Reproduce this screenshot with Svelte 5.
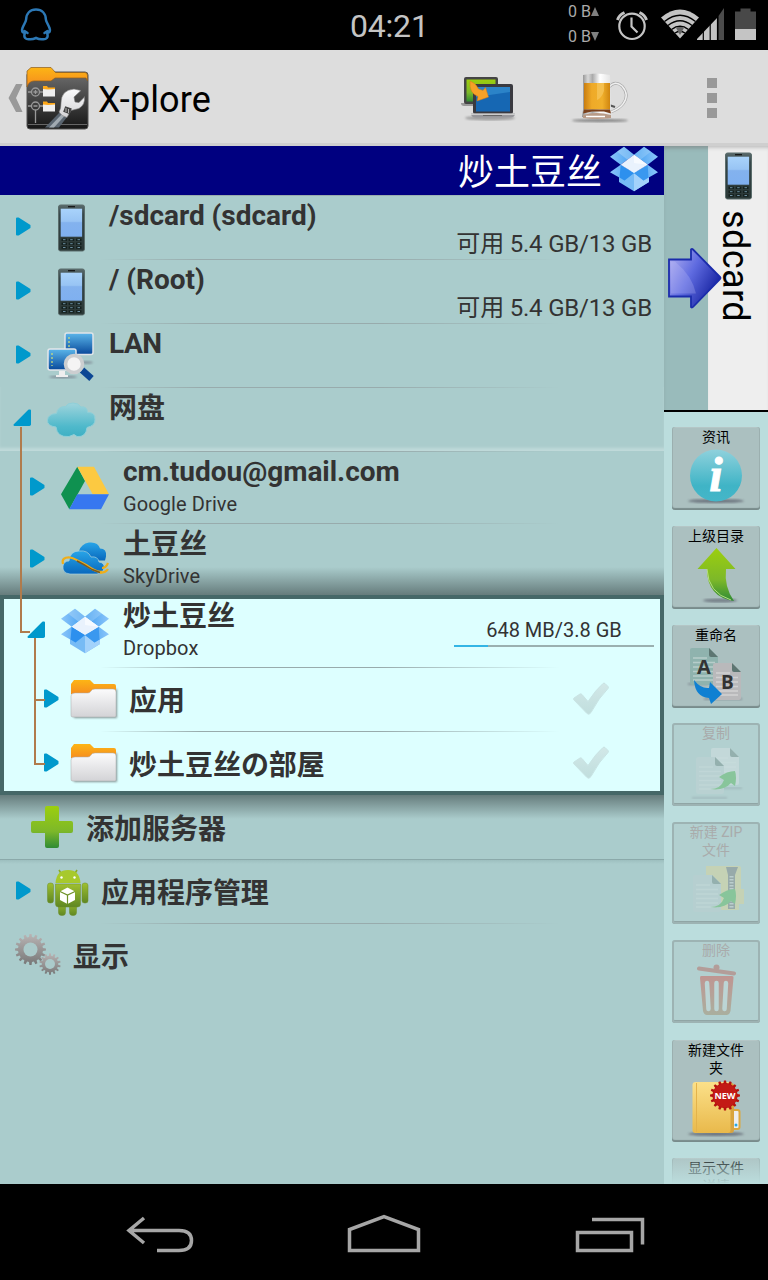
<script>
  const gear = (cx, cy, r, n, depth) => {
    const pts = [];
    for (let i = 0; i < n; i++) {
      const step = (Math.PI * 2) / n;
      [[-0.3, r - depth], [-0.18, r], [0.18, r], [0.3, r - depth]].forEach(([o, rad]) => {
        const a = (i + o) * step - Math.PI / 2;
        pts.push(`${(cx + Math.cos(a) * rad).toFixed(2)},${(cy + Math.sin(a) * rad).toFixed(2)}`);
      });
    }
    return pts.join(' ');
  };
</script>

<svg class="defs" width="0" height="0">
  <defs>
    <linearGradient id="screen" x1="0" y1="0" x2="0" y2="1"><stop offset="0" stop-color="#a9d3fb" /><stop offset=".45" stop-color="#98c4f4" /><stop offset=".5" stop-color="#83b2ee" /><stop offset="1" stop-color="#7fb0f0" /></linearGradient>
    <linearGradient id="body" x1="0" y1="0" x2="0" y2="1"><stop offset="0" stop-color="#5a6b6c" /><stop offset=".2" stop-color="#36474a" /><stop offset="1" stop-color="#2b3836" /></linearGradient>
    <linearGradient id="orange" x1="0" y1="0" x2="0" y2="1"><stop offset="0" stop-color="#fdb515" /><stop offset="1" stop-color="#f58a1f" /></linearGradient>
    <linearGradient id="paper" x1="0" y1="0" x2="0" y2="1"><stop offset="0" stop-color="#fbfbfc" /><stop offset="1" stop-color="#d3d3d6" /></linearGradient>
    <linearGradient id="cloud" x1="0" y1="0" x2="0" y2="1"><stop offset="0" stop-color="#9fd4dc" /><stop offset=".7" stop-color="#4fb9cb" /><stop offset="1" stop-color="#3fb0c4" /></linearGradient>
    <linearGradient id="green" x1="0" y1="0" x2="0" y2="1"><stop offset="0" stop-color="#9ccf0e" /><stop offset=".6" stop-color="#7db829" /><stop offset="1" stop-color="#2f8b35" /></linearGradient>
    <linearGradient id="monitor" x1="0" y1="0" x2="0" y2="1"><stop offset="0" stop-color="#5bb6ea" /><stop offset="1" stop-color="#08489a" /></linearGradient>
    <linearGradient id="sky" x1="0" y1="0" x2="0" y2="1"><stop offset="0" stop-color="#29a5e8" /><stop offset="1" stop-color="#0868bd" /></linearGradient>
    <linearGradient id="droid" x1="0" y1="0" x2="0" y2="1"><stop offset="0" stop-color="#9fc030" /><stop offset="1" stop-color="#5f8722" /></linearGradient>
    <linearGradient id="metal" x1="0" y1="0" x2="0" y2="1"><stop offset="0" stop-color="#b9b4b4" /><stop offset="1" stop-color="#777" /></linearGradient>
    <linearGradient id="tick" x1="0" y1="0" x2="0" y2="1"><stop offset="0" stop-color="#d2e8e8" /><stop offset="1" stop-color="#c0dedd" /></linearGradient>
    <linearGradient id="beer" x1="0" y1="0" x2="1" y2="0"><stop offset="0" stop-color="#c97d10" /><stop offset=".3" stop-color="#efaa28" /><stop offset=".7" stop-color="#f0b02c" /><stop offset="1" stop-color="#d0860f" /></linearGradient>
    <linearGradient id="glass" x1="0" y1="0" x2="1" y2="0"><stop offset="0" stop-color="#8a8a8a" /><stop offset=".2" stop-color="#d8d8d8" /><stop offset=".35" stop-color="#aaa" /><stop offset=".6" stop-color="#fff" /><stop offset="1" stop-color="#e0e0e0" /></linearGradient>
    <linearGradient id="arrow" x1="0" y1="0" x2="1" y2=".6"><stop offset="0" stop-color="#b9b6f2" /><stop offset=".5" stop-color="#5f6be0" /><stop offset="1" stop-color="#1522a0" /></linearGradient>
    <linearGradient id="info" x1="0" y1="0" x2="0" y2="1"><stop offset="0" stop-color="#8fd1dc" /><stop offset=".7" stop-color="#3fb4c6" /><stop offset="1" stop-color="#45b6c8" /></linearGradient>
    <linearGradient id="folderY" x1="0" y1="0" x2="0" y2="1"><stop offset="0" stop-color="#fbe089" /><stop offset="1" stop-color="#e9b94b" /></linearGradient>
    <linearGradient id="red" x1="0" y1="0" x2="0" y2="1"><stop offset="0" stop-color="#d92a20" /><stop offset="1" stop-color="#9c7445" /></linearGradient>
    <linearGradient id="dark" x1="0" y1="0" x2="0" y2="1"><stop offset="0" stop-color="#6e6e6e" /><stop offset="1" stop-color="#161616" /></linearGradient>
    <linearGradient id="fade" x1="0" y1="0" x2="1" y2="0"><stop offset="0" stop-color="#3f9df0" /><stop offset="1" stop-color="#8cc6fa" /></linearGradient>
    <linearGradient id="fade2" x1="0" y1="0" x2="1" y2="0"><stop offset="0" stop-color="#8cc6fa" /><stop offset="1" stop-color="#3f9df0" /></linearGradient>
    <filter id="soft"><feGaussianBlur stdDeviation="1.2" /></filter>
  </defs>
</svg>

{#snippet closed()}
  <svg class="tri" width="16" height="19" viewBox="0 0 16 19"><path d="M2 1.500h1.500L14.500 8.500v2L3.500 17.500H2z" fill="#0099cc" stroke="#0099cc" stroke-width="2" stroke-linejoin="round" /></svg>
{/snippet}
{#snippet opened()}
  <svg class="tri open" width="18" height="18" viewBox="0 0 18 18"><path d="M1.500 16L16 1.500H17v14l-1 .5z" fill="#0099cc" stroke="#0099cc" stroke-width="2" stroke-linejoin="round" /></svg>
{/snippet}
{#snippet phone()}
  <svg class="ico" width="48" height="48" viewBox="0 0 48 48">
    <rect x="11.500" y="1" width="26" height="46" rx="2" fill="url(#body)" stroke="#5b6d6c" stroke-width="1" />
    <rect x="13.700" y="4.700" width="21.400" height="28" fill="url(#screen)" />
    <path d="M21 2.700h7" stroke="#111" stroke-width="1.200" />
    {#each [35.700, 39.700, 43.500] as y}
      <path d="M14.500 {y}h5.500M21.700 {y}h5.500M29 {y}h5.500" stroke="#14201e" stroke-width="2.600" />
      <path d="M16 {y}h2.500M23.200 {y}h2.500M30.500 {y}h2.500" stroke="#6c8ea0" stroke-width="1" />
    {/each}
  </svg>
{/snippet}
{#snippet dropbox()}
  <svg class="ico" width="48" height="48" viewBox="61 606 48 48">
    <path d="M70 638l15-8 15 8v5l-15 9.200L70 643z" fill="#77bbf5" />
    <path d="M85 634v18.200l15-9.200v-4z" fill="#a3d2fb" />
    <path d="M75 607.700l10 8-13.300 10L61 617.700z" fill="url(#fade2)" />
    <path d="M95 607.700l-10 8 13.700 10 10.300-8z" fill="url(#fade)" />
    <path d="M75 607.700l10 8-6.500 5L68 612.500z" fill="#b3daf8" opacity=".45" />
    <path d="M95 607.700l-10 8 6.500 5L102 612.500z" fill="#b3daf8" opacity=".35" />
    <path d="M61 633.300l10.700-7.600L85 634l-9.500 7.500z" fill="url(#fade2)" />
    <path d="M109 633.300l-10.300-7.600L85 634l9.500 7.500z" fill="url(#fade)" />
    <path d="M71.700 625.700L85 634l-9.500 7.500-5-3z" fill="#2d90ee" />
    <path d="M98.700 625.700L85 634l9.500 7.500 5-3z" fill="#3a98ef" />
    <path d="M85 615.700l13.700 10L85 634l-13.300-8.300z" fill="#e9f2fd" />
    <path d="M85 615.700l13.700 10L85 624z" fill="#f6faff" />
  </svg>
{/snippet}
{#snippet folder()}
  <svg class="ico" width="48" height="40" viewBox="0 0 48 40">
    <path d="M3 10h44v29H4z" fill="#718080" opacity=".8" filter="url(#soft)" />
    <path d="M1 15V5l3-4h16l4 4h20q2 0 2 2v9z" fill="url(#orange)" />
    <path d="M1 36V17q0-3 4-3h13q2 0 3-2t4-2h18q3 0 3 3v24q0 1-1 1H2q-1 0-1-2z" fill="url(#paper)" stroke="#aaa" stroke-width=".5" />
  </svg>
{/snippet}
{#snippet check()}
  <svg class="check" width="38" height="34" viewBox="0 0 38 34"><path d="M2 16l6-4q1-.5 2 .5l6 7q8-12 15-18 1-.8 2 0l3 3q1 1 0 2-9 9-17 24-2 3-4 1L2 18q-1-1 0-2z" fill="url(#tick)" stroke="#c9e4e4" /></svg>
{/snippet}
{#snippet sheet(x, y, c)}
  <g transform="translate({x} {y})">
    <path d="M0 2q0-2 2-2h17l9 9v26q0 2-2 2H2q-2 0-2-2z" fill={c} />
    <path d="M19 0l9 9h-7q-2 0-2-2z" fill="#5d7672" />
    <path d="M3 10h14M3 14.500h22M3 19h22M3 23.500h22M3 28h22M3 32h22" stroke="#fff" stroke-width="1.400" opacity=".35" />
  </g>
{/snippet}

<div class="device">
  <header class="status">
    <svg class="qq" width="34" height="36" viewBox="19 8 34 36"><path d="M36 10.500c-6 0-9.700 4-9.900 10-.1 2-2 4.500-3.600 8.500-1.200 3.300-.2 4.500 2.300 4.800-1.500 5 1 6.800 4.500 6.500 3 .2 5-.5 6.700-1.300 1.700.8 3.700 1.500 6.700 1.300 3.500.3 6-1.500 4.500-6.500 2.500-.3 3.500-1.500 2.300-4.800-1.600-4-3.500-6.500-3.600-8.500-.2-6-3.900-10-9.900-10zM24.500 32l3 2M47.500 32l-3 2" fill="none" stroke="#2c78b5" stroke-width="2.500" stroke-linecap="round" /></svg>
    <span class="time">04:21</span>
    <div class="traffic"><span>0 B<i class="up"></i></span><span>0 B<i class="down"></i></span></div>
    <svg class="sys" width="152" height="50" viewBox="608 0 152 50">
      <g fill="none" stroke="#c4c4c4" stroke-width="2.200"><circle cx="632" cy="26.300" r="12.700" /><path d="M631.500 17.500v9l6 6" /><path d="M617.500 20q1.500-5 7-7.500M646.500 20q-1.500-5-7-7.500" stroke-width="3" /></g>
      <path d="M661 17.500q19-16 38 0L680 38.500z" fill="#c4c4c4" />
      <path d="M664.500 21.500q15.500-12.500 31 0M668 25.500q12-9.500 24 0M671.500 29.500q8.500-6.500 17 0M675 33q5-3.500 10 0" fill="none" stroke="#000" stroke-width="1.300" />
      <path d="M675.500 27h9l-4.500 8z" fill="#666" />
      <path d="M697 40v-1l20-21v22z" fill="#c4c4c4" /><path d="M718.500 16l5.500-8v32h-5.500z" fill="#4b4b4b" />
      <path d="M703.300 25v16M710.200 18v23M717.500 10v31" stroke="#000" stroke-width="1.200" />
      <path d="M735 11.500h5.500V8.500h10v3h5.500V29h-21z" fill="#484848" /><path d="M735 29h21v11h-21z" fill="#c4c4c4" />
    </svg>
  </header>

  <header class="action">
    <svg class="logo" width="84" height="68" viewBox="6 64 84 68">
      <path d="M16 84h6.500l-6.500 14 6.500 14H16l-7.500-14z" fill="#999" />
      <rect x="27" y="72" width="61" height="57" rx="3" fill="url(#dark)" stroke="#555" />
      <path d="M27 87V71l4-3.500h20l4.500 5H85q2.500 0 2.500 3V81L86 78H55l-4 3H34q-5 0-7 6z" fill="url(#orange)" stroke="#8b5c20" stroke-width=".7" />
      <path d="M28 124.500h59" stroke="#666" />
      <g fill="none" stroke="#999" stroke-width="1.300"><circle cx="35.500" cy="92" r="4" /><circle cx="35.500" cy="106" r="4" /><path d="M28 92h3.500M39.500 92H43M33.500 92h4M35.500 90v4M28 106h3.500M39.500 106H43M33.500 106h4M35.500 110v13" /></g>
      <path d="M43 88h12v8.500H43zM43 103h12v8.500H43z" fill="#eee" /><path d="M43 89v-3h4l1 1.500h7V89l-7 .5zM43 104.500v-3h4l1 1.500h7v1.500l-7 .5z" fill="#fda819" />
      <path d="M45 127.500L60 112l7 5-8 10.500z" fill="#59646f" /><path d="M49 127.500L62 114l2.500 2-10.500 11.500z" fill="#a1aab2" />
      <path d="M59 112q2-3 2-9 0-13 13-14l7 1.500-7 6.500 1 5 4 .5 5-5 .5 -1q1 8-5.500 12l-8 2-4 7q-5-1-8-5.500z" fill="url(#paper)" stroke="#777" stroke-width=".6" />
      <rect x="64" y="107" width="7" height="6" fill="#444" transform="rotate(20 67 110)" /><path d="M66 108v4M68.500 109v4" stroke="#ccc" stroke-width=".8" />
    </svg>
    <h1>X-plore</h1>
    <svg class="act" width="60" height="56" viewBox="458 72 60 56">
      <ellipse cx="490" cy="119" rx="25" ry="2.500" fill="#777" opacity=".6" filter="url(#soft)" />
      <path d="M461 104h14v3h-11q-3 0-3-3z" fill="#999" />
      <rect x="464" y="78" width="34" height="27" rx="2" fill="#444" /><rect x="466.500" y="80.500" width="29" height="22" fill="url(#green)" />
      <rect x="473" y="85" width="40" height="30" rx="2" fill="#3a3a40" /><rect x="476" y="88" width="34" height="24.500" fill="#1667b3" /><path d="M476 88h34v5l-34 5z" fill="#2b83c8" />
      <path d="M471 114.500h44q0 4-5 4h-34q-5 0-5-4z" fill="#97979b" /><path d="M471 114.500h44v1.500h-44z" fill="#ccc" /><path d="M483 116.500h19" stroke="#666" />
      <path d="M470 82q6 2 8.500 8l4.500 1.500 2.500-3L488.500 98 477 102l1-4.500q-9-3-8-15.500z" fill="#f7a127" stroke="#d67b14" stroke-width=".5" />
    </svg>
    <svg class="act" width="60" height="56" viewBox="570 72 60 56">
      <ellipse cx="600" cy="121.500" rx="28" ry="1.700" fill="#666" opacity=".7" filter="url(#soft)" />
      <path d="M609 88q6-7 13-1 8 9 1 18-4 5-12 8" fill="none" stroke="#aaa" stroke-width="2.800" /><path d="M609 88q6-7 13-1 8 9 1 18-4 5-12 8" fill="none" stroke="#f0f0f0" stroke-width="1.400" />
      <path d="M609 106l6 2" stroke="#555" stroke-width="2" />
      <path d="M583 76q13-3 27 0l1 35 1 7q-15 4-30 0l1-7z" fill="url(#glass)" />
      <path d="M584 84h26v26.500h-26z" fill="url(#beer)" /><path d="M597 84h7v8q-3 8-7 9z" fill="#f8cc68" opacity=".6" />
      <path d="M584 110.500h26l1 4-7-2h-12l-9 2z" fill="#7c421d" /><path d="M583 116q13-4 28 0v3q-14 2-28 0z" fill="#b89a86" /><path d="M586 117.500h19" stroke="#fff" stroke-width="1.500" />
    </svg>
    <div class="more"><i></i><i></i><i></i></div>
  </header>

  <main>
    <section class="pane">
      <div class="path"><span>炒土豆丝</span>{@render dropbox()}</div>
      <div class="list">
        <div class="row">{@render closed()}{@render phone()}<div class="label"><b>/sdcard (sdcard)</b></div><span class="free">可用 5.4 GB/13 GB</span></div>
        <div class="row">{@render closed()}{@render phone()}<div class="label"><b>/ (Root)</b></div><span class="free">可用 5.4 GB/13 GB</span></div>
        <div class="row">{@render closed()}
          <svg class="ico" width="48" height="48" viewBox="47 331 48 48">
            <ellipse cx="63" cy="376" rx="14" ry="1.500" fill="#667" opacity=".6" filter="url(#soft)" /><ellipse cx="84" cy="361.500" rx="9" ry="1.300" fill="#667" opacity=".6" filter="url(#soft)" />
            <rect x="65" y="332" width="28" height="21.500" rx="2" fill="url(#monitor)" stroke="#dfe4e8" stroke-width="1.500" />
            <path d="M69 336v13" stroke="#cfe07a" stroke-dasharray="2 2" stroke-width="1.200" />
            <rect x="48" y="348" width="28" height="21" rx="2" fill="url(#monitor)" stroke="#e3e6ea" stroke-width="1.500" />
            <path d="M52 352v13" stroke="#cfe07a" stroke-dasharray="2 2" stroke-width="1.200" /><path d="M59 370h6v4h3v2H56v-2h3z" fill="#eee" />
            <path d="M82 369l9.500 8.500" stroke="#0c4794" stroke-width="6.500" />
            <circle cx="74" cy="363" r="8.500" fill="#f4f4f4" stroke="#ccced0" stroke-width="3.600" />
          </svg>
          <div class="label"><b class="tight">LAN</b></div></div>
        <div class="row expanded">{@render opened()}
          <svg class="ico" width="48" height="48" viewBox="47 394 48 48"><path d="M56 425q-9-1-8.500-7 .5-6 9-6.500 1-7 9-7 2-3.500 7.500-3.500t8 4q6-1 6.500 5.500 8-.5 7.500 7 .5 6-8 8-1 10-10 9l-3-2-5 2q-12 1-13-9.500z" fill="url(#cloud)" stroke="#8fcfd8" /></svg>
          <div class="label"><b class="han">网盘</b></div></div>
        <div class="row tall">{@render closed()}
          <svg class="ico" width="48" height="48" viewBox="61 463 48 48"><path d="M77.300 465.700L85 480l-15.700 28.300-8.300-15z" fill="#0f9150" /><path d="M77.300 465.700H94l15 27.600H92.700z" fill="#fcc941" /><path d="M77.300 493.300H109l-8 15H69.300z" fill="#3777f0" /></svg>
          <div class="label"><b>cm.tudou@gmail.com</b><small>Google Drive</small></div></div>
        <div class="row tall shade-above">{@render closed()}
          <svg class="ico" width="48" height="48" viewBox="61 535 48 48">
            <path d="M79 550q2-7 10-8.500 9-1 11 6 7 0 6 8l-1 4H88z" fill="url(#sky)" />
            <path d="M70 573q-8-1-7-8 1-5 6-5 1-10 10-10 9-1 12 6 7-1 8 5 6 1 5 6-1 5-7 6z" fill="url(#sky)" stroke="#a8d0dc" stroke-width=".7" />
            <path d="M63 563q-2-7 7-6.500 5 1 16 7.500 11 8 16 6.500M100 572q6-.5 8-4M102 567q4 0 6-5" fill="none" stroke="#f0ae18" stroke-width="2.200" /><path d="M77 560q8 4 15 8.500l8 3" fill="none" stroke="#7a5a20" stroke-width="1.400" />
          </svg>
          <div class="label"><b class="han">土豆丝</b><small>SkyDrive</small></div></div>
        <div class="selected">
          <div class="row tall plain">{@render opened()}{@render dropbox()}<div class="label"><b class="han">炒土豆丝</b><small>Dropbox</small></div>
            <div class="quota"><span>648 MB/3.8 GB</span><div class="bar"><i style="width: 17%"></i></div></div></div>
          <div class="row deep">{@render closed()}{@render folder()}<div class="label"><b class="han">应用</b></div>{@render check()}</div>
          <div class="row deep">{@render closed()}{@render folder()}<div class="label"><b class="han">炒土豆丝の部屋</b></div>{@render check()}</div>
        </div>
        <div class="row add plain shade-below">
          <svg class="ico" width="44" height="44" viewBox="0 0 44 44"><path d="M17 1h10q2 0 2 2v13h12q2 0 2 2v8q0 2-2 2H29v13q0 2-2 2H17q-2 0-2-2V28H3q-2 0-2-2v-8q0-2 2-2h12V3q0-2 2-2z" fill="url(#green)" /></svg>
          <div class="label"><b class="han">添加服务器</b></div></div>
        <div class="row apps">{@render closed()}
          <svg class="ico" width="42" height="48" viewBox="47 867 42 48">
            <path d="M59 869l3 5M77 869l-3 5" stroke="#8aac25" stroke-width="1.600" />
            <path d="M55.500 882q1-13 12.500-13t12.500 13z" fill="#a7c92c" /><circle cx="61.500" cy="876.500" r="1.200" fill="#fff" /><circle cx="74.500" cy="876.500" r="1.200" fill="#fff" />
            <g fill="url(#droid)" stroke="#6d8f2a" stroke-width=".5"><rect x="47.500" y="882" width="6" height="20" rx="2.500" /><rect x="82" y="882" width="6" height="20" rx="2.500" /><rect x="58.500" y="900" width="7" height="14.500" rx="3" /><rect x="69.500" y="900" width="7" height="14.500" rx="3" /><path d="M55.500 883h25v20q0 3-3 3h-19q-3 0-3-3z" /></g>
            <path d="M67.500 886.500l7.500 4v8.500l-7.500 4-7.500-4v-8.500z" fill="#fff" /><path d="M60 890.500l7.500 3.500 7.500-3.500M67.500 894v9" fill="none" stroke="#6d9127" stroke-width="1.200" />
          </svg>
          <div class="label"><b class="han">应用程序管理</b></div></div>
        <div class="row show">
          <svg class="ico" width="46" height="44" viewBox="15 934 46 44">
            <polygon points={gear(30.500, 949.500, 15.500, 16, 3)} fill="url(#metal)" /><circle cx="30.500" cy="949.500" r="7" fill="#abcaca" />
            <polygon points={gear(50, 964, 10.700, 14, 2.500)} fill="url(#metal)" /><circle cx="50" cy="964" r="5" fill="#abcaca" />
          </svg>
          <div class="label"><b class="han">显示</b></div></div>
        <svg class="tree" width="60" height="600" viewBox="0 195 60 600"><path d="M21 427V632h9M35 638V764h10M35 700h10" fill="none" stroke="#b07b4c" stroke-width="2" /></svg>
      </div>
    </section>

    <aside>
      <div class="tabs">
        <svg class="swap" width="54" height="62" viewBox="667 247 54 62"><path d="M669 259.500h22V249.500q1-1 2 0L720 277q1 1 0 2l-27 28q-1 1-2 0v-10.500h-22z" fill="url(#arrow)" stroke="#1b2cab" stroke-width="1.800" /><path d="M671 261.500h4q17 14 21 32h-25z" fill="#c9c6fa" opacity=".25" /></svg>
        <div class="tab">{@render phone()}<span>sdcard</span></div>
      </div>
      <div class="tools">
        <button><span>资讯</span>
          <svg width="56" height="56" viewBox="688 448 56 56"><ellipse cx="716" cy="501" rx="28" ry="2" fill="#445" opacity=".6" filter="url(#soft)" /><circle cx="716" cy="475.500" r="26" fill="url(#info)" /><text x="716" y="491" font-family="Liberation Serif" font-size="48" font-weight="700" font-style="italic" text-anchor="middle" fill="#fff" stroke="#fff">i</text></svg></button>
        <button><span>上级目录</span>
          <svg width="56" height="56" viewBox="688 547 56 56"><ellipse cx="720" cy="600.500" rx="17" ry="2" fill="#445" opacity=".5" filter="url(#soft)" /><path d="M716.500 548L735.500 569H726q-2 18 8 32-27-4-27-32h-9.500z" fill="url(#green)" /><path d="M707 569q1 24 24 31" stroke="#b5df80" fill="none" /></svg></button>
        <button><span>重命名</span>
          <svg width="56" height="56" viewBox="688 646 56 56"><path d="M688 684h20M704 699h38" stroke="#556" stroke-width="2" opacity=".4" filter="url(#soft)" />{@render sheet(690, 648, '#8fb3ae')}{@render sheet(713, 663, '#b9b9bb')}<text x="704" y="674" font-family="Open Sans" font-weight="700" font-size="20" text-anchor="middle" fill="#333">A</text><text x="727.500" y="689" font-family="Open Sans" font-weight="700" font-size="19" text-anchor="middle" fill="#333">B</text><path d="M694 680q7 9 15 8l1-6 12 12-11 10-2-6q-14-1-15-18z" fill="#0f80d2" /></svg></button>
        <button class="off"><span>复制</span>
          <svg width="56" height="56" viewBox="688 745 56 56"><path d="M692 799h35M720 789h22" stroke="#556" stroke-width="2" opacity=".5" filter="url(#soft)" />{@render sheet(711, 749, '#e3e9ea')}{@render sheet(696, 758, '#c6d4d6')}<path d="M710 790q11 0 14-9l-5-3q8-6 16-6 2 6 0 15l-4-3q-7 8-21 6z" fill="#3db23a" /></svg></button>
        <button class="off big"><span>新建 ZIP<br />文件</span>
          <svg width="56" height="56" viewBox="688 862 56 56"><path d="M706 867h33q2 0 2 2v21h3v15h-5v6h-33z" fill="#ead886" /><path d="M726 868h12l-3 8v34h-7v-34z" fill="#666" /><path d="M731.500 877v33" stroke="#ccc" stroke-width="4" stroke-dasharray="1.500 1.500" />{@render sheet(693, 876, '#bfcfd2')}<path d="M710 908q11 0 14-9l-5-3q8-6 16-6 2 6 0 15l-4-3q-7 8-21 6z" fill="#3db23a" /></svg></button>
        <button class="off"><span>删除</span>
          <svg width="56" height="56" viewBox="688 962 56 56"><path d="M697 1016h38" stroke="#556" stroke-width="2" opacity=".5" filter="url(#soft)" /><path d="M699 969.500l35 5" stroke="#b74034" stroke-width="4" stroke-linecap="round" /><circle cx="716.500" cy="968.500" r="3" fill="#b74034" /><path d="M701 977h31q2 0 1.500 2l-3 33q-1 4-4 4H707q-3 0-4-4l-3-33q0-2 1-2z" fill="url(#red)" /><path d="M707 984l1.500 26M716.500 984v26M726 984l-1.500 26" stroke="#cfe0e0" stroke-width="4.500" stroke-linecap="round" /></svg></button>
        <button class="big"><span>新建文件<br />夹</span>
          <svg width="56" height="56" viewBox="688 1079 56 56"><ellipse cx="716" cy="1134" rx="28" ry="2" fill="#445" opacity=".6" filter="url(#soft)" /><rect x="732" y="1110" width="7.500" height="19" rx="2" fill="#eee" stroke="#dca83e" stroke-width="2" /><circle cx="736" cy="1125" r="1.500" fill="#29a8e0" /><rect x="700" y="1083" width="34" height="50" rx="3" fill="#d9a43d" /><rect x="692.500" y="1082" width="38" height="51" rx="3" fill="url(#folderY)" /><path d="M696.500 1083v49" stroke="#e3b34b" /><polygon points={gear(725, 1095.500, 15, 16, 2.500)} fill="#b5120f" /><circle cx="725" cy="1095.500" r="12" fill="#c31a16" /><text x="725" y="1099" font-family="Open Sans" font-weight="700" font-size="9" text-anchor="middle" fill="#fff">NEW</text></svg></button>
        <button class="big"><span>显示文件<br />详情</span></button>
      </div>
    </aside>
  </main>

  <nav>
    <svg width="768" height="96" viewBox="0 1184 768 96" fill="none" stroke="#a6a6a6" stroke-width="3.500"><path d="M144 1218l-15 12.500 15 12.500M130 1230.500h49q12.500 0 12.500 10t-12.500 10h-22" /><path d="M349.500 1250.500v-21L384 1216.500l34.500 13v21z" /><path d="M577.500 1232.500h54v18h-54zM592 1219.500h50.500v25" /></svg>
  </nav>
</div>

<style>
  :global(body) { margin: 0; background: #000; }
  .defs { position: absolute; }
  .device { width: 768px; height: 1280px; display: flex; flex-direction: column; overflow: hidden; font-family: Roboto, "Noto Sans CJK SC", sans-serif; color: #333; background: #000; }
  svg { display: block; flex: none; overflow: visible; }
  .status { height: 50px; flex: none; display: flex; align-items: center; color: #c4c4c4; }
  .qq { margin-left: 19px; }
  .time { width: 80px; margin-left: 297px; margin-top: 1px; font-size: 32px; letter-spacing: -.2px; }
  .traffic { width: 33px; margin-left: 138px; display: flex; flex-direction: column; font-size: 16px; line-height: 25px; white-space: nowrap; margin-top: -3px; }
  .traffic span { display: flex; align-items: center; color: #aaa; }
  .traffic i { margin-left: 0; border: 4.500px solid transparent; }
  .traffic .up { border-top: 0; border-bottom: 9px solid #808080; }
  .traffic .down { border-bottom: 0; border-top: 9px solid #808080; }
  .sys { margin-left: 7px; }
  .action { height: 96px; flex: none; box-sizing: border-box; display: flex; align-items: center; background: #ddd; border-bottom: 3px solid #cfcfcf; }
  .logo { margin-left: 6px; margin-top: 3px; }
  h1 { width: 360px; margin: 7px 0 0 8px; font-size: 36px; font-weight: 400; line-height: 42px; letter-spacing: .1px; color: #000; }
  .act { margin-top: 4px; }
  .act + .act { margin-left: 52px; }
  .more { margin-left: 77px; margin-top: 3px; display: flex; flex-direction: column; gap: 5px; }
  .more i { width: 10px; height: 10px; background: #999; }
  main { height: 1038px; flex: none; display: flex; background: #bdd; }
  .pane { width: 664px; display: flex; flex-direction: column; background: #acc; }
  .path { height: 49px; flex: none; box-sizing: border-box; padding-right: 6px; display: flex; justify-content: flex-end; align-items: center; gap: 8px; background: #000080; color: #fff; font-size: 36px; line-height: 49px; }
  .path span { margin-top: 5px; }
  .path .ico { margin-top: -3px; }
  .list { position: relative; flex: 1; min-height: 0; display: flex; flex-direction: column; }
  .row { height: 64px; flex: none; display: flex; align-items: center; background: linear-gradient(90deg, transparent 100px, #98abac 200px, #98abac 380px, transparent 560px) top / 100% 1px no-repeat; }
  .ico { position: relative; }
  .row > .ico { margin-top: 1px; }
  .tri { margin: -2px 16px 0 15px; }
  .tri.open { margin-left: 13px; }
  .label { align-self: flex-start; margin-left: 14px; padding-top: 5px; display: flex; flex-direction: column; white-space: nowrap; }
  b { font-size: 28px; line-height: 32px; height: 32px; letter-spacing: -.03px; }
  .tight { letter-spacing: -.5px; }
  .han { padding-top: 1px; height: 31px; }
  small { font-size: 20px; line-height: 28px; height: 28px; margin-top: 2px; letter-spacing: .1px; }
  .free { align-self: flex-end; margin: 0 12px 0 auto; font-size: 24px; line-height: 30px; letter-spacing: -.2px; }
  .expanded { box-shadow: inset 0 -4px 3px -1px #c0dada; }
  .tall { height: 72px; }
  .tall .tri { margin-left: 29px; }
  .tall .tri.open { margin-left: 27px; }
  .shade-above { background: linear-gradient(transparent 44px, #667c7c 72px), linear-gradient(90deg, transparent 100px, #98abac 200px, #98abac 380px, transparent 560px) top / 100% 1px no-repeat; }
  .shade-below { background: linear-gradient(#667c7c, transparent 24px); }
  .selected { width: 664px; height: 200px; flex: none; background: #dff; box-shadow: inset 0 0 0 4px #466868; }
  .plain:not(.shade-below) { background: none; }
  .plain .ico { margin-top: -1px; }
  .quota { width: 200px; margin: 0 10px 0 auto; align-self: center; display: flex; flex-direction: column; align-items: center; font-size: 20px; line-height: 28px; }
  .bar { width: 100%; height: 2px; margin-top: 1px; background: #9ab0b0; }
  .bar i { display: block; height: 2px; background: #33b5e5; }
  .deep .tri { margin-left: 43px; margin-right: 11px; }
  .deep .ico { margin-top: -1px; }
  .deep .label, .add .label, .apps .label, .show .label { align-self: center; padding: 4px 0 0; }
  .deep .label { margin-left: 11px; }
  .check { margin-left: auto; margin-right: 54px; }
  .add .ico { margin-left: 30px; }
  .add .label { margin-left: 12px; }
  .apps { background: linear-gradient(#8ba9aa 0 1px, #9dbfbf 1px, transparent 5px); }
  .apps .label { margin-left: 12px; }
  .show .ico { margin-left: 15px; }
  .show .label { margin-left: 12px; }
  .tree { position: absolute; left: 0; top: 0; }
  aside { width: 104px; display: flex; flex-direction: column; }
  .tabs { position: relative; height: 264px; flex: none; display: flex; justify-content: flex-end; background: #9bb; border-bottom: 2px solid #000; box-shadow: inset 0 4px 4px -2px #7779; }
  .tab { width: 60px; display: flex; flex-direction: column; align-items: center; padding-top: 6px; box-sizing: border-box; background: #eee; color: #000; box-shadow: inset 0 4px 4px -3px #8889; }
  .tab span { writing-mode: vertical-rl; font-size: 36px; line-height: 42px; margin: 10px 7px 0 0; letter-spacing: .4px; }
  .swap { position: absolute; left: 3px; top: 101px; z-index: 1; }
  .tools { flex: 1; min-height: 0; overflow: hidden; position: relative; display: flex; flex-direction: column; align-items: center; gap: 16px; padding-top: 15px; }
  .tools::after { content: ""; position: absolute; inset: auto 0 0; height: 28px; background: linear-gradient(#bbdddd22, #bdd); }
  button { width: 88px; height: 83px; flex: none; box-sizing: border-box; padding: 1px 0 0; border: 0; border-radius: 3px; display: flex; flex-direction: column; align-items: center; gap: 2px; font: 400 14px/18px Roboto, "Noto Sans CJK SC", sans-serif; color: #000; background: #abc0c0; box-shadow: inset 0 -2px 1px #788b8b, inset 1px 0 #9fb3b3, inset -1px 0 #9fb3b3, inset 0 1px #b4c6c6; }
  .big { height: 102px; }
  .off { background: #b2d0d0; box-shadow: inset 0 0 0 2px #9db3b3, inset 0 -3px #90a5a5; color: #a9abab; position: relative; top: -1px; }
  .off svg { opacity: .35; }
  nav { height: 96px; background: #000; }
</style>
